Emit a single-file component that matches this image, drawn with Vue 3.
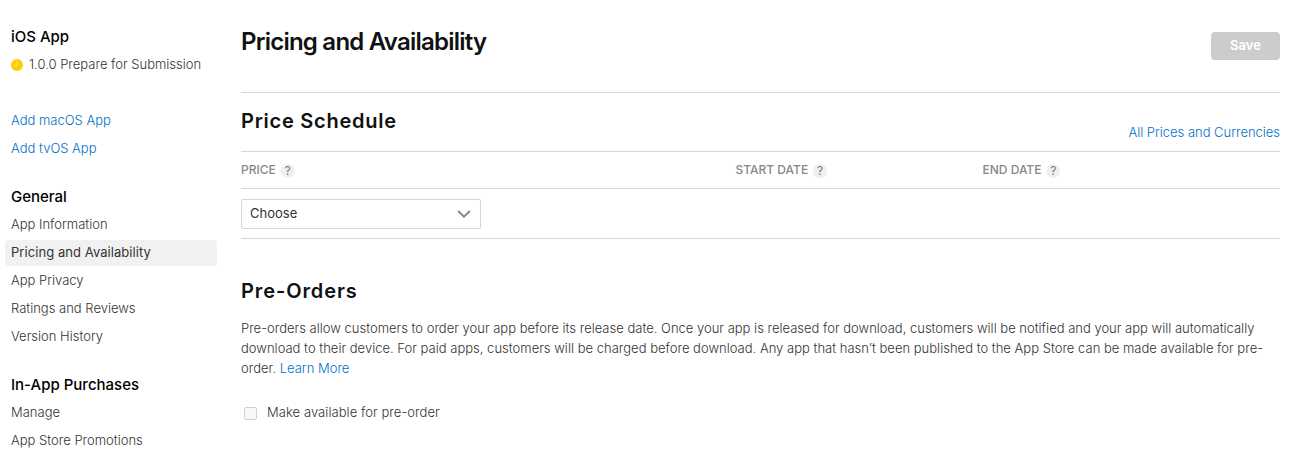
<script setup>
const groups = [
  { title: 'General', items: ['App Information', 'Pricing and Availability', 'App Privacy', 'Ratings and Reviews', 'Version History'] },
  { title: 'In-App Purchases', items: ['Manage', 'App Store Promotions'] },
]
const current = 'Pricing and Availability'
const columns = ['Price', 'Start Date', 'End Date']
</script>

<template>
  <div class="page">
    <nav class="sidebar">
      <section class="group platform">
        <h3>iOS App</h3>
        <a class="item version">
          <svg class="status" viewBox="0 0 12 12" width="12" height="12">
            <circle cx="6" cy="6" r="6" fill="#ffcc00" />
            <path d="M6 2.8V6.4H3.2" fill="none" stroke="#fff" stroke-opacity=".75" stroke-width=".9" />
          </svg>
          <span>1.0.0 Prepare for Submission</span>
        </a>
      </section>
      <section class="group">
        <a class="item link">Add macOS App</a>
        <a class="item link">Add tvOS App</a>
      </section>
      <section v-for="g in groups" :key="g.title" class="group">
        <h3>{{ g.title }}</h3>
        <a v-for="i in g.items" :key="i" class="item" :class="{ active: i === current }">{{ i }}</a>
      </section>
    </nav>

    <main class="content">
      <header class="top">
        <h1>Pricing and Availability</h1>
        <button class="save" disabled>Save</button>
      </header>

      <div class="schedule-head">
        <h2>Price Schedule</h2>
        <a class="link all">All Prices and Currencies</a>
      </div>

      <div class="row head">
        <div v-for="c in columns" :key="c" class="cell">
          <span class="label">{{ c }}</span><span class="help">?</span>
        </div>
      </div>
      <div class="row body">
        <div class="select">
          <span>Choose</span>
          <svg viewBox="0 0 14 8" width="14" height="8">
            <path d="M1.2 1L7 6.6L12.8 1" fill="none" stroke="#86868b" stroke-width="2" />
          </svg>
        </div>
      </div>

      <h2 class="pre-title">Pre-Orders</h2>
      <p class="copy">
        <span>Pre-orders allow customers to order your app before its release date. Once your app is released for download, customers will be notified and your app will automatically</span><br>
        <span class="wide">download to their device. For paid apps, customers will be charged before download. Any app that hasn’t been published to the App Store can be made available for pre-</span><br>
        <span>order. </span><a class="link">Learn More</a>
      </p>
      <div class="check">
        <span class="box"></span>
        <span class="check-label">Make available for pre-order</span>
      </div>
    </main>
  </div>
</template>

<style>
body { margin: 0; background: #fff; overflow: hidden; }
</style>

<style scoped>
.page {
  display: flex;
  width: 1307px;
  height: 459px;
  overflow: hidden;
  box-sizing: border-box;
  font-family: Inter, "Liberation Sans", sans-serif;
  font-size: 13px;
  font-weight: 300;
  color: #333;
}
h1, h2, h3, p { margin: 0; }
.sidebar { width: 212px; padding: 23px 0 0 5px; flex: none; }
.group { display: flex; flex-direction: column; margin-bottom: 20px; }
.platform { margin-bottom: 28px; }
h3 {
  padding-left: 6px;
  font-size: 15px;
  line-height: 28px;
  font-weight: 500;
  color: #000;
}
.item {
  display: flex;
  align-items: center;
  box-sizing: border-box;
  height: 26px;
  margin: 1px 0;
  padding: 0 0 2px 6px;
  border-radius: 4px;
  white-space: nowrap;
}
.status { margin: 2px 6px 0 0; }
.active { background: #f1f1f1; color: #333; font-weight: 400; letter-spacing: 0.06px; }
.link { color: #0070c9; }
.content { width: 1039px; margin-left: 24px; flex: none; }
.top {
  display: flex;
  justify-content: space-between;
  align-items: flex-start;
  height: 92px;
  border-bottom: 1px solid #d6d6d6;
}
h1 {
  margin-top: 27px;
  font-size: 24px;
  line-height: 30px;
  font-weight: 600;
  letter-spacing: -0.77px;
  color: #111;
}
.save {
  width: 69px;
  height: 28px;
  margin-top: 32px;
  padding: 0 0 1px;
  border: 0;
  border-radius: 4px;
  background: #ccc;
  color: #fff;
  font: 600 13px/27px Inter, sans-serif;
}
.schedule-head {
  display: flex;
  justify-content: space-between;
  height: 58px;
  border-bottom: 1px solid #d6d6d6;
}
h2 {
  font-size: 20px;
  line-height: 24px;
  font-weight: 600;
  letter-spacing: 0.75px;
  color: #111;
}
.schedule-head h2 { margin-top: 16px; }
.all { margin-top: 29px; line-height: 20px; letter-spacing: -0.02px; }
.row { display: grid; grid-template-columns: 494.5px 247px 1fr; border-bottom: 1px solid #d6d6d6; }
.head { height: 36px; }
.cell { display: flex; align-items: center; height: 36px; }
.label { margin-top: -2px; font-size: 12px; font-weight: 500; text-transform: uppercase; color: #888; }
.help {
  width: 14px;
  height: 14px;
  margin: 1px 0 0 5px;
  border-radius: 50%;
  background: #f0f0f0;
  color: #777;
  font-size: 12px;
  font-weight: 400;
  line-height: 14px;
  text-align: center;
}
.body { height: 49px; }
.select {
  display: flex;
  align-items: center;
  justify-content: space-between;
  box-sizing: border-box;
  width: 240px;
  height: 30px;
  margin-top: 10px;
  padding: 0 9px 0 8px;
  border: 1px solid #d6d6d6;
  border-radius: 2px;
  font-weight: 400;
  color: #333;
}
.select span { margin-top: -2px; }
.pre-title { margin-top: 40px; letter-spacing: 0.9px; }
.copy { margin-top: 15px; line-height: 20px; white-space: nowrap; }
.wide { letter-spacing: 0.01px; }
.check { display: flex; align-items: center; height: 20px; margin-top: 24px; }
.check-label { letter-spacing: 0.06px; }
.box {
  box-sizing: border-box;
  width: 13px;
  height: 13px;
  margin: 2px 10px 0 3px;
  border: 1px solid #d0d0d0;
  border-radius: 2px;
  background: #f8f8f8;
}
</style>
